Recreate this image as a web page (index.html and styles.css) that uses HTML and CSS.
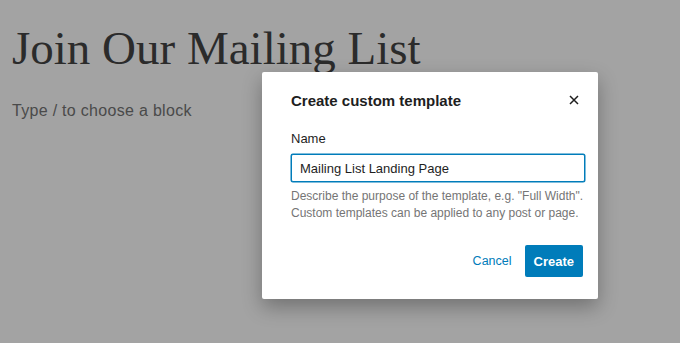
FILE: index.html
```html
<!DOCTYPE html>
<html lang="en">
<head>
  <meta charset="UTF-8">
  <title>Create custom template</title>
  <link rel="stylesheet" href="styles.css">
</head>
<body>
  <div class="editor">
    <h1 class="post-title">Join Our Mailing List</h1>
    <p class="block-hint">Type / to choose a block</p>
  </div>

  <div class="modal" role="dialog">
    <div class="modal-header">
      <h2>Create custom template</h2>
      <button class="close-btn" aria-label="Close">
        <svg width="10" height="10" viewBox="0 0 10 10">
          <path d="M1 1 L9 9 M9 1 L1 9" stroke="#1e1e1e" stroke-width="1.5" fill="none"/>
        </svg>
      </button>
    </div>
    <div class="form-group">
      <label for="template-name">Name</label>
      <input type="text" id="template-name" value="Mailing List Landing Page" />
      <p class="help">Describe the purpose of the template, e.g. "Full Width". Custom templates can be applied to any post or page.</p>
    </div>
    <div class="actions">
      <button class="btn-link">Cancel</button>
      <button class="btn-primary">Create</button>
    </div>
  </div>
</body>
</html>
```

FILE: styles.css
```css
body {
  margin: 0;
  background-color: #a3a3a3;
  font-family: "Liberation Sans", Arial, sans-serif;
  color: #1e1e1e;
}
.editor {
  padding: 20px 12px;
}
.post-title {
  font-family: "Liberation Serif", "Times New Roman", serif;
  font-weight: normal;
  font-size: 47px;
  line-height: 56px;
  margin: 0;
  color: #2b2b2b;
}
.block-hint {
  margin: 25px 0 0;
  font-size: 16px;
  line-height: 20px;
  letter-spacing: 0.3px;
  color: #4a4a4a;
}
.modal {
  position: absolute;
  left: 262px;
  top: 72px;
  width: 336px;
  box-sizing: border-box;
  padding: 0 13px 22px 29px;
  background-color: #fff;
  border-radius: 2px;
  box-shadow: 0 8px 20px rgba(0, 0, 0, 0.3);
}
.modal-header {
  height: 56px;
  display: flex;
  align-items: center;
  justify-content: space-between;
}
.modal-header h2 {
  margin: 0;
  font-size: 15px;
  font-weight: 600;
  color: #1e1e1e;
}
.close-btn {
  background: none;
  border: none;
  padding: 0;
  margin-right: 6px;
  width: 10px;
  height: 10px;
  display: flex;
}
.form-group {
  padding-top: 3px;
}
label {
  display: block;
  font-size: 13px;
  line-height: 16px;
  margin-bottom: 7px;
  color: #1e1e1e;
}
input {
  display: block;
  width: 100%;
  height: 28px;
  box-sizing: border-box;
  padding: 0 8px;
  border: 1px solid #007cba;
  box-shadow: 0 0 0 0.5px #007cba;
  border-radius: 2px;
  font-family: "Liberation Sans", Arial, sans-serif;
  font-size: 13px;
  color: #1e1e1e;
  outline: none;
}
.help {
  margin: 6px 0 0;
  font-size: 12px;
  line-height: 17px;
  color: #757575;
}
.actions {
  margin: 23px 2px 0 0;
  display: flex;
  justify-content: flex-end;
  align-items: center;
  gap: 13px;
}
.btn-link {
  background: none;
  border: none;
  padding: 0;
  font-family: "Liberation Sans", Arial, sans-serif;
  font-size: 12.5px;
  color: #007cba;
}
.btn-primary {
  background-color: #007cba;
  color: #fff;
  border: none;
  border-radius: 2px;
  height: 32px;
  padding: 0 9px;
  font-family: "Liberation Sans", Arial, sans-serif;
  font-size: 13px;
  font-weight: 600;
}
```
